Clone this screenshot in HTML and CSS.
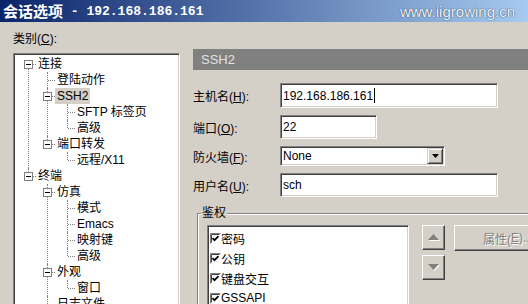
FILE: index.html
```html
<!DOCTYPE html>
<html lang="zh-CN">
<head>
<meta charset="utf-8">
<title>会话选项</title>
<link rel="stylesheet" href="styles.css">
</head>
<body>
<div class="window">
  <div class="titlebar">
    <span class="title-cjk">会话选项</span><span class="title-lat"> - 192.168.186.161</span>
    <span class="watermark">www.iigrowing.cn</span>
  </div>
  <div class="content">
    <div class="sidebar">
      <div class="cat-label">类别(<u>C</u>):</div>
      <div class="tree">
        <ul>
          <li>
            <div class="row"><svg class="exp" width="9" height="9" viewBox="0 0 9 9"><rect x="0.5" y="0.5" width="8" height="8" fill="#fff" stroke="#808080"/><path d="M2 4.5h5" stroke="#000"/></svg><span class="txt">连接</span></div>
            <ul>
              <li><div class="row"><span class="txt">登陆动作</span></div></li>
              <li>
                <div class="row"><svg class="exp" width="9" height="9" viewBox="0 0 9 9"><rect x="0.5" y="0.5" width="8" height="8" fill="#fff" stroke="#808080"/><path d="M2 4.5h5" stroke="#000"/></svg><span class="txt sel">SSH2</span></div>
                <ul>
                  <li><div class="row"><span class="txt">SFTP 标签页</span></div></li>
                  <li><div class="row"><span class="txt">高级</span></div></li>
                </ul>
              </li>
              <li>
                <div class="row"><svg class="exp" width="9" height="9" viewBox="0 0 9 9"><rect x="0.5" y="0.5" width="8" height="8" fill="#fff" stroke="#808080"/><path d="M2 4.5h5" stroke="#000"/></svg><span class="txt">端口转发</span></div>
                <ul>
                  <li><div class="row"><span class="txt">远程/X11</span></div></li>
                </ul>
              </li>
            </ul>
          </li>
          <li>
            <div class="row"><svg class="exp" width="9" height="9" viewBox="0 0 9 9"><rect x="0.5" y="0.5" width="8" height="8" fill="#fff" stroke="#808080"/><path d="M2 4.5h5" stroke="#000"/></svg><span class="txt">终端</span></div>
            <ul>
              <li>
                <div class="row"><svg class="exp" width="9" height="9" viewBox="0 0 9 9"><rect x="0.5" y="0.5" width="8" height="8" fill="#fff" stroke="#808080"/><path d="M2 4.5h5" stroke="#000"/></svg><span class="txt">仿真</span></div>
                <ul>
                  <li><div class="row"><span class="txt">模式</span></div></li>
                  <li><div class="row"><span class="txt">Emacs</span></div></li>
                  <li><div class="row"><span class="txt">映射键</span></div></li>
                  <li><div class="row"><span class="txt">高级</span></div></li>
                </ul>
              </li>
              <li>
                <div class="row"><svg class="exp" width="9" height="9" viewBox="0 0 9 9"><rect x="0.5" y="0.5" width="8" height="8" fill="#fff" stroke="#808080"/><path d="M2 4.5h5" stroke="#000"/></svg><span class="txt">外观</span></div>
                <ul>
                  <li><div class="row"><span class="txt">窗口</span></div></li>
                </ul>
              </li>
              <li class="more"><div class="row"><span class="txt">日志文件</span></div></li>
            </ul>
          </li>
        </ul>
      </div>
    </div>

    <div class="panel">
      <div class="panel-header">SSH2</div>
      <div class="form">
        <label>主机名(<u>H</u>):</label>
        <div class="field w-host">192.168.186.161<span class="caret"></span></div>
        <label>端口(<u>O</u>):</label>
        <div class="field w-port">22</div>
        <label>防火墙(<u>F</u>):</label>
        <div class="field select"><span class="val">None</span><span class="dd-btn"><svg width="7" height="4" viewBox="0 0 7 4"><path d="M0 0h7L3.5 4z" fill="#000"/></svg></span></div>
        <label>用户名(<u>U</u>):</label>
        <div class="field w-user">sch</div>
      </div>
      <fieldset class="group">
        <legend>鉴权</legend>
        <div class="group-body">
          <div class="list">
            <div class="item"><svg class="chk" width="11" height="11" viewBox="0 0 11 11"><rect width="11" height="11" fill="#fff"/><path d="M0.5 10.5V0.5H10.5" stroke="#808080" fill="none"/><path d="M1.5 9.5V1.5H9.5" stroke="#404040" fill="none"/><path d="M2.5 5.2l2 2 4-4" stroke="#000" stroke-width="1.7" fill="none"/></svg><span>密码</span></div>
            <div class="item"><svg class="chk" width="11" height="11" viewBox="0 0 11 11"><rect width="11" height="11" fill="#fff"/><path d="M0.5 10.5V0.5H10.5" stroke="#808080" fill="none"/><path d="M1.5 9.5V1.5H9.5" stroke="#404040" fill="none"/><path d="M2.5 5.2l2 2 4-4" stroke="#000" stroke-width="1.7" fill="none"/></svg><span>公钥</span></div>
            <div class="item"><svg class="chk" width="11" height="11" viewBox="0 0 11 11"><rect width="11" height="11" fill="#fff"/><path d="M0.5 10.5V0.5H10.5" stroke="#808080" fill="none"/><path d="M1.5 9.5V1.5H9.5" stroke="#404040" fill="none"/><path d="M2.5 5.2l2 2 4-4" stroke="#000" stroke-width="1.7" fill="none"/></svg><span>键盘交互</span></div>
            <div class="item"><svg class="chk" width="11" height="11" viewBox="0 0 11 11"><rect width="11" height="11" fill="#fff"/><path d="M0.5 10.5V0.5H10.5" stroke="#808080" fill="none"/><path d="M1.5 9.5V1.5H9.5" stroke="#404040" fill="none"/><path d="M2.5 5.2l2 2 4-4" stroke="#000" stroke-width="1.7" fill="none"/></svg><span>GSSAPI</span></div>
          </div>
          <div class="arrows">
            <div class="btn arrow-btn"><svg width="12" height="7" viewBox="0 0 12 7"><path d="M6.5 1L12 7H1z" fill="#fff"/><path d="M5.5 0L11 6H0z" fill="#808080"/></svg></div>
            <div class="btn arrow-btn"><svg width="12" height="7" viewBox="0 0 12 7"><path d="M1 1h11L6.5 7z" fill="#fff"/><path d="M0 0h11L5.5 6z" fill="#808080"/></svg></div>
          </div>
          <div class="btn prop-btn">属性(<u>E</u>)...</div>
        </div>
      </fieldset>
    </div>
  </div>
</div>
</body>
</html>
```

FILE: styles.css
```css
* { box-sizing: border-box; }
html, body { margin: 0; padding: 0; }
body {
  width: 528px;
  height: 304px;
  overflow: hidden;
  background: #d4d0c8;
  font-family: "Liberation Sans", "Noto Sans CJK SC", sans-serif;
  font-size: 12px;
  color: #000;
}
.window {
  width: 528px;
  height: 304px;
  overflow: hidden;
  display: flex;
  flex-direction: column;
}
.titlebar {
  height: 22px;
  flex: none;
  display: flex;
  align-items: center;
  padding-left: 3px;
  background: linear-gradient(to right, #0a246a, #a6caf0);
  color: #fff;
  font-weight: bold;
  white-space: nowrap;
}
.title-cjk {
  font-family: "Noto Sans CJK SC", sans-serif;
  font-size: 15px;
  line-height: 22px;
}
.title-lat {
  font-family: "Liberation Mono", monospace;
  font-size: 13px;
  white-space: pre;
}
.watermark {
  margin-left: auto;
  margin-right: 13px;
  font-family: "Liberation Sans", sans-serif;
  font-weight: normal;
  font-size: 15px;
  color: #f2f5fa;
  text-shadow: 0 0 1px #3c4c6c, 0 0 1px #3c4c6c;
}
.content {
  flex: 1;
  display: flex;
  min-height: 0;
}
.sidebar {
  flex: none;
  width: 167px;
  margin-left: 13px;
  display: flex;
  flex-direction: column;
}
.cat-label {
  margin-top: 9px;
  height: 16px;
  line-height: 16px;
}
.tree {
  flex: none;
  margin-top: 6px;
  height: 280px;
  background: #fff;
  border: 1px solid;
  border-color: #808080 #fff #fff #808080;
  box-shadow: inset 1px 1px #404040, inset -1px -1px #d4d0c8;
  padding-top: 2px;
  overflow: hidden;
}
.tree ul {
  list-style: none;
  margin: 0;
  padding: 0 0 0 19px;
}
.tree > ul { padding-left: 14px; }
.tree ul ul ul { padding-left: 20px; }
.tree li { position: relative; }
.tree li::before {
  content: "";
  position: absolute;
  left: 0;
  top: 0;
  bottom: 0;
  border-left: 1px dotted #808080;
}
.tree li:last-child::before { bottom: auto; height: 8px; }
.tree li.more::before { bottom: 0; height: auto; }
.tree > ul > li:first-child::before { top: 8px; }
.tree li::after {
  content: "";
  position: absolute;
  left: 1px;
  top: 8px;
  width: 7px;
  border-top: 1px dotted #808080;
}
.row {
  height: 16px;
  padding-left: 8px;
  display: flex;
  align-items: center;
}
.txt {
  padding: 0 2px;
  line-height: 16px;
  white-space: nowrap;
}
.txt.sel { background: #d4d0c8; }
.exp {
  position: absolute;
  left: -4px;
  top: 4px;
  display: block;
  z-index: 1;
}

.panel {
  flex: none;
  width: 340px;
  margin-left: 13px;
  margin-top: 27px;
}
.panel-header {
  height: 21px;
  background: #808080;
  color: #e2e2e2;
  font-size: 13px;
  line-height: 21px;
  padding-left: 8px;
}
.form {
  margin-top: 13px;
  display: grid;
  grid-template-columns: 87px auto;
  row-gap: 7px;
  align-items: center;
  justify-items: start;
}
.form label { white-space: nowrap; }
.field {
  height: 24px;
  background: #fff;
  border: 1px solid;
  border-color: #808080 #fff #fff #808080;
  box-shadow: inset 1px 1px #404040, inset -1px -1px #d4d0c8;
  padding-left: 2px;
  display: flex;
  align-items: center;
  white-space: nowrap;
}
.w-host { width: 218px; height: 25px; }
.w-port { width: 97px; }
.w-user { width: 218px; }
.caret {
  display: inline-block;
  width: 1px;
  height: 15px;
  background: #000;
  margin-left: 1px;
}
.select {
  width: 165px;
  height: 20px;
  padding: 1px 1px 1px 2px;
}
.select .val { flex: 1; }
.dd-btn {
  width: 16px;
  height: 16px;
  background: #d4d0c8;
  border: 1px solid;
  border-color: #d4d0c8 #404040 #404040 #d4d0c8;
  box-shadow: inset 1px 1px #fff, inset -1px -1px #808080;
  display: flex;
  align-items: center;
  justify-content: center;
}
.dd-btn svg { display: block; }

.group {
  margin: 8px 0 0 4px;
  padding: 0;
  width: 340px;
  min-width: 0;
  height: 130px;
  border: 1px solid #808080;
  box-shadow: inset 1px 1px #fff, 1px 1px #fff;
}
.group legend {
  margin-left: 3px;
  padding: 0 1px;
  line-height: 16px;
  background: #d4d0c8;
}
.group-body {
  display: flex;
  align-items: flex-start;
  margin: 4px 0 0 9px;
}
.list {
  flex: none;
  width: 202px;
  height: 100px;
  background: #fff;
  border: 1px solid;
  border-color: #808080 #fff #fff #808080;
  box-shadow: inset 1px 1px #404040, inset -1px -1px #d4d0c8;
  padding: 2px 0 0 2px;
}
.item {
  height: 20px;
  display: flex;
  align-items: center;
  white-space: nowrap;
}
.chk { display: block; flex: none; }
.arrows {
  flex: none;
  margin-left: 13px;
  display: flex;
  flex-direction: column;
  gap: 5px;
}
.btn {
  background: #d4d0c8;
  border: 1px solid;
  border-color: #fff #404040 #404040 #fff;
  box-shadow: inset -1px -1px #808080;
  display: flex;
  align-items: center;
  justify-content: center;
}
.arrow-btn { width: 23px; height: 25px; }
.arrow-btn svg { display: block; }
.prop-btn {
  flex: none;
  margin-left: 9px;
  width: 108px;
  height: 26px;
  color: #808080;
  text-shadow: 1px 1px 0 #fff;
  white-space: nowrap;
}
```
